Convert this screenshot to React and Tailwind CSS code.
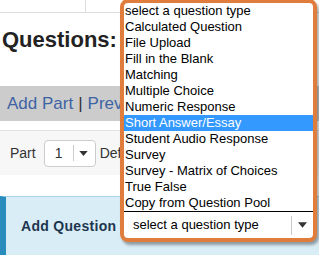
import React from 'react';

const questionTypes = [
  'select a question type',
  'Calculated Question',
  'File Upload',
  'Fill in the Blank',
  'Matching',
  'Multiple Choice',
  'Numeric Response',
  'Short Answer/Essay',
  'Student Audio Response',
  'Survey',
  'Survey - Matrix of Choices',
  'True False',
  'Copy from Question Pool',
];

const Caret = ({ className }) => (
  <svg viewBox="0 0 10 6" className={className}>
    <path d="M0 0 L10 0 L5 6 Z" fill="currentColor" />
  </svg>
);

const App = () => {
  const selected = 'Short Answer/Essay';

  return (
    <div className="relative w-[319px] h-[255px] overflow-hidden bg-white font-['Liberation_Sans',Arial,sans-serif]">
      {/* Tabs (scrolled off the top) */}
      <div className="h-[13px] flex border-b border-[#dddddd] overflow-hidden text-[13px] text-[#555555]">
        <div className="w-[86px] pl-[3px] -mt-[14px] border-r border-[#dddddd] whitespace-nowrap">Assessments</div>
        <div className="pl-[10px] -mt-[14px] whitespace-nowrap">Assessments</div>
      </div>

      {/* Title */}
      <h1 className="pl-[2px] pt-[14px] h-[73px] text-[22px] leading-[26px] font-bold text-[#222222]">Questions:</h1>

      {/* Action bar */}
      <div className="h-[35px] bg-[#cccccc] pl-[7px] flex items-center text-[17px] whitespace-nowrap">
        <span className="text-[#3d63a4]">Add Part</span>
        <span className="mx-[5px] text-[#333333]">|</span>
        <span className="text-[#3d63a4]">Preview</span>
      </div>

      <div className="h-[9px]" />

      {/* Part selector */}
      <div className="h-[45px] bg-[#f7f7f7] border-t border-[#e3e3e3] flex items-center pl-[10px] text-[14px] text-[#333333] whitespace-nowrap">
        <span>Part</span>
        <div className="ml-[8px] w-[52px] h-[27px] bg-white border border-[#cccccc] rounded-[4px] flex items-center">
          <span className="w-[28px] text-center">1</span>
          <span className="w-px h-[16px] bg-[#cccccc]" />
          <Caret className="ml-[5px] w-[9px] h-[5px] text-[#333333]" />
        </div>
        <span className="ml-[4px]">Default Settings</span>
      </div>

      <div className="h-[21px]" />

      {/* Add question panel */}
      <div className="h-[60px] bg-[#d9edf7] border-t border-[#a9d4ea] border-l-[6px] border-l-[#2a8cbc] flex items-center pl-[15px]">
        <span className="text-[14px] font-bold text-[#1d3650] tracking-[0.3px]">Add Question</span>
      </div>

      {/* Open question type dropdown */}
      <div className="absolute left-[120px] -top-px w-[197px] h-[243px] border-4 border-[#e07d3c] rounded-[8px] bg-white shadow-[2px_3px_3px_rgba(0,0,0,0.35)] overflow-hidden flex flex-col text-[13px] text-black">
        <ul className="border-b border-black">
          {questionTypes.map((t) => (
            <li
              key={t}
              className={`h-[16px] leading-[16px] pl-[1px] whitespace-nowrap ${
                t === selected ? 'bg-[#3399ff] text-white' : ''
              }`}
            >
              {t}
            </li>
          ))}
        </ul>
        <div className="flex-1 flex items-center">
          <span className="flex-1 pl-[9px] whitespace-nowrap">select a question type</span>
          <span className="w-px h-[19px] bg-[#c8c8c8]" />
          <Caret className="mx-[6px] w-[9px] h-[6px] text-[#333333]" />
        </div>
      </div>
    </div>
  );
};

export default App;
